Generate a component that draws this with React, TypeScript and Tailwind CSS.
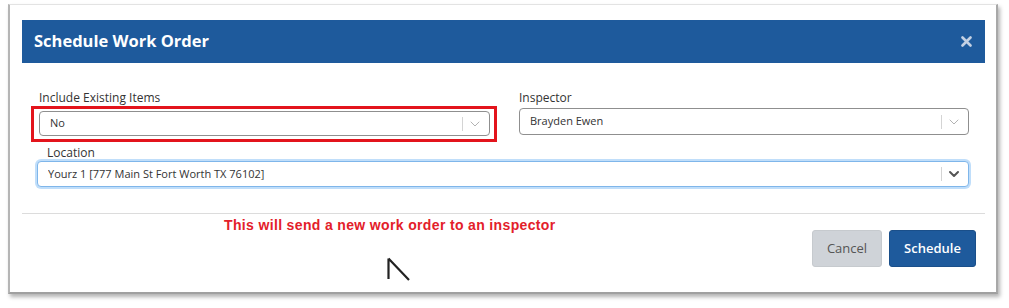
import { ChevronDown } from "lucide-react";

const ui = { fontFamily: '"Open Sans", "Noto Sans", sans-serif' };

function Select({ value, focused }: { value: string; focused?: boolean }) {
  return (
    <div
      className={
        "flex items-center rounded-[4px] bg-white pl-[10px] pr-[6px] " +
        (focused
          ? "h-[26px] border border-[#7fb6ea] shadow-[0_0_0_2px_rgba(140,195,245,0.55)]"
          : "h-[25px] border border-[#8f8f8f]")
      }
    >
      <span className="flex-1 truncate text-[11px] text-[#333]">{value}</span>
      <span className="h-[14px] w-px bg-[#d4d4d4]" />
      <ChevronDown
        size={16}
        strokeWidth={focused ? 3 : 1.5}
        className={focused ? "ml-[4px] text-[#555]" : "ml-[4px] text-[#b3b3b3]"}
      />
    </div>
  );
}

export default function App() {
  return (
    <div className="relative h-[308px] w-[1009px] overflow-hidden bg-white" style={ui}>
      <div className="ml-[8px] mt-[4px] h-[290px] w-[990px] border-t border-l-2 border-r-2 border-b-2 border-t-[#e3e3e3] border-l-[#b5b5b5] border-r-[#a8a8a8] border-b-[#a0a0a0] bg-white pl-[12px] pr-[11px] pt-[15px] shadow-[2px_3px_4px_rgba(0,0,0,0.3)]">
        {/* header */}
        <div className="flex h-[43px] items-center justify-between bg-[#1e5a9c] pl-[12px] pr-[13px]">
          <h1 className="text-[16.5px] font-bold text-white">Schedule Work Order</h1>
          <svg width="11" height="11" viewBox="0 0 11 11">
            <path d="M1.5 1.5 L9.5 9.5 M9.5 1.5 L1.5 9.5" stroke="#c3d0e3" strokeWidth="2.6" strokeLinecap="round" />
          </svg>
        </div>

        {/* fields */}
        <div className="mt-[26px] flex items-start">
          <div className="ml-[9px] w-[466px]">
            <label className="block pl-[8px] text-[12px] leading-[17px] text-[#333]">Include Existing Items</label>
            <div className="border-[3px] border-[#e3141c] pb-[3px] pl-[5px] pr-[4px] pt-[2px]">
              <Select value="No" />
            </div>
          </div>
          <div className="ml-[22px] w-[450px]">
            <label className="block text-[12px] leading-[18px] text-[#333]">Inspector</label>
            <div className="mt-[1px] [&>div]:h-[27px]">
              <Select value="Brayden Ewen" />
            </div>
          </div>
        </div>

        <div className="ml-[15px] w-[932px]">
          <label className="block pl-[10px] pt-[2px] text-[12px] leading-[17px] text-[#333]">Location</label>
          <Select value="Yourz 1 [777 Main St Fort Worth TX 76102]" focused />
        </div>

        <div className="mt-[26px] h-px bg-[#dcdcdc]" />

        {/* footer */}
        <div className="flex items-start">
          <p
            className="ml-[202px] mt-[3px] text-[14px] font-bold leading-[17px] tracking-[0.35px] text-[#e3202a]"
            style={{ fontFamily: '"Liberation Sans", Arial, sans-serif' }}
          >
            This will send a new work order to an inspector
          </p>
          <div className="ml-auto mr-[9px] mt-[16px] flex gap-[7px]">
            <button className="h-[37px] w-[70px] rounded-[3px] border border-[#c6cace] bg-[#cfd3d8] text-[13px] text-[#555]">
              Cancel
            </button>
            <button className="h-[37px] w-[87px] rounded-[3px] border border-[#1a4f8a] bg-[#1e5a9c] text-[13px] font-semibold text-white">
              Schedule
            </button>
          </div>
        </div>
      </div>

      {/* mouse pointer */}
      <svg className="absolute left-[386px] top-[257px]" width="26" height="26" viewBox="0 0 26 26">
        <path d="M2.5 1.5 L2.5 22 M2.5 1.5 L23 23" stroke="#222" strokeWidth="2.2" fill="none" />
      </svg>
    </div>
  );
}
